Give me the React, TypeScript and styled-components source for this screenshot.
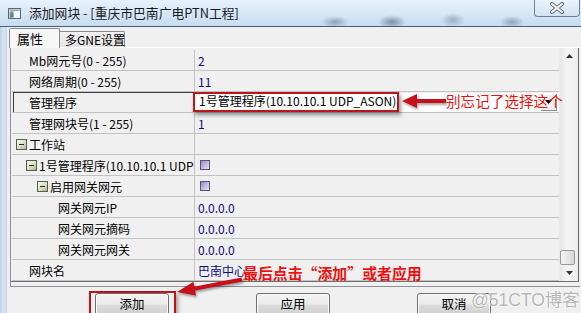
import React from 'react';
import styled, { createGlobalStyle, css } from 'styled-components';

const FONT = `"Noto Sans CJK SC", "Liberation Sans", sans-serif`;

const GlobalStyle = createGlobalStyle`
  html, body { margin: 0; padding: 0; background: #f0f0f0; }
  body { width: 581px; height: 313px; overflow: hidden; font-family: ${FONT}; }
`;

const Window = styled.div`
  position: relative;
  width: 581px;
  height: 313px;
  overflow: hidden;
  display: flex;
  flex-direction: column;
  background: linear-gradient(90deg, #bccfe2 0px, #d9e6f2 3px, #c6d7e9 7px);
  font-family: ${FONT};
`;

const TitleBar = styled.div`
  flex: none;
  height: 26px;
  display: flex;
  align-items: flex-start;
  border-bottom: 1px solid #4e5d6c;
  background:
    radial-gradient(ellipse 14px 6px at 335px 22px, rgba(70, 90, 115, 0.45), transparent),
    radial-gradient(ellipse 14px 7px at 392px 22px, rgba(60, 80, 105, 0.55), transparent),
    radial-gradient(ellipse 12px 7px at 453px 20px, rgba(80, 100, 125, 0.4), transparent),
    radial-gradient(ellipse 12px 6px at 512px 22px, rgba(70, 90, 115, 0.45), transparent),
    linear-gradient(180deg, #e6f1fb 0%, #d9e9f8 45%, #c6dcf1 100%);
`;

const AppIcon = styled.svg`
  flex: none;
  margin: 8px 0 0 8px;
`;

const Title = styled.div`
  margin: 4px 0 0 8px;
  font-size: 12.8px;
  line-height: 18px;
  color: #1b1b1b;
  white-space: nowrap;
`;

const CloseButton = styled.div`
  margin-left: auto;
  margin-right: 1px;
  width: 44px;
  height: 16px;
  border: 1px solid #6f8297;
  border-top: none;
  border-radius: 0 0 4px 4px;
  background: linear-gradient(180deg, rgba(240, 247, 253, 0.6), rgba(205, 222, 240, 0.6));
  display: flex;
  align-items: center;
  justify-content: center;
`;

const Body = styled.div`
  flex: 1;
  margin-left: 7px;
  background: #f0f0f0;
  display: flex;
  flex-direction: column;
  min-height: 0;
`;

const TabStrip = styled.div`
  flex: none;
  height: 20px;
  display: flex;
  align-items: flex-end;
  padding-left: 2px;
  position: relative;
  z-index: 1;
`;

const Tab = styled.div<{ $active?: boolean }>`
  box-sizing: border-box;
  border: 1px solid #898c95;
  border-bottom: none;
  color: #000;
  white-space: nowrap;
  display: flex;
  align-items: center;
  ${(p) =>
    p.$active
      ? css`
          width: 51px;
          height: 20px;
          margin-bottom: -1px;
          padding-left: 7px;
          font-size: 13px;
          background: #f7f7f7;
          border-radius: 2px 2px 0 0;
        `
      : css`
          width: 65px;
          height: 16px;
          padding-left: 5px;
          font-size: 12px;
          border-left: none;
          background: linear-gradient(180deg, #f2f2f2, #e3e3e3);
          border-radius: 0 2px 0 0;
        `}
`;

const Panel = styled.div`
  flex: none;
  margin-left: 3px;
  width: 570px;
  height: 240px;
  box-sizing: border-box;
  border-top: 1px solid #fdfdfd;
  border-left: 1px solid #8d9097;
  border-bottom: 1px solid #8d9097;
  padding-bottom: 4px;
  display: flex;
`;

const Grid = styled.div`
  flex: 1;
  display: flex;
  border-bottom: 1px solid #6f6f6f;
  border-right: 1px solid #6a6a6a;
  margin-right: 1px;
`;

const RowsArea = styled.div`
  flex: 1;
  padding-top: 2px;
  display: flex;
  flex-direction: column;
`;

const Row = styled.div`
  box-sizing: border-box;
  height: 21px;
  display: grid;
  grid-template-columns: 183px 1fr;
  border-bottom: 1px solid #c2c2c2;
  margin-left: 1px;
`;

const LabelCell = styled.div<{ $indent: number; $selected?: boolean }>`
  display: flex;
  align-items: center;
  gap: 2px;
  padding-left: ${(p) => p.$indent}px;
  border-right: 1px solid #c2c2c2;
  overflow: hidden;
  white-space: nowrap;
  font-size: 12px;
  color: #000;
  ${(p) =>
    p.$selected &&
    css`
      margin-left: 1px;
      padding-left: ${p.$indent - 1}px;
      box-shadow: inset 1px 1px 0 #3c3c3c;
    `}
`;

const ValueCell = styled.div<{ $editing?: boolean }>`
  display: flex;
  align-items: center;
  padding-left: 3px;
  font-size: 12px;
  color: #0a0a86;
  white-space: nowrap;
  overflow: hidden;
  ${(p) =>
    p.$editing &&
    css`
      background: #fff;
      color: #000;
      margin: 1px 0 0 0;
      padding-left: 4px;
      padding-bottom: 3px;
      line-height: 14px;
    `}
`;

const ComboButton = styled.div`
  margin-left: auto;
  margin-right: 2px;
  margin-bottom: -3px;
  width: 16px;
  height: 17px;
  box-sizing: border-box;
  border-right: 1px solid #8a8a8a;
  border-bottom: 1px solid #8a8a8a;
  box-shadow: inset 1px 1px 0 #fff;
  background: #f0f0f0;
  display: flex;
  align-items: center;
  justify-content: center;
`;

const Expander = styled.span`
  flex: none;
  width: 9px;
  height: 9px;
  border: 1px solid #51604f;
  background: linear-gradient(135deg, #fbfbea 0%, #d6dcbc 60%, #aab592 100%);
  display: flex;
  align-items: center;
  justify-content: center;
  &::after {
    content: '';
    width: 5px;
    height: 1px;
    background: #1d2a50;
  }
`;

const CheckBox = styled.span`
  width: 10px;
  height: 10px;
  box-sizing: border-box;
  border: 1px solid #5a5670;
  background: linear-gradient(135deg, #8f86bd 0%, #bdb5e2 45%, #e4e0f5 100%);
  margin-left: 2px;
`;

const ScrollBar = styled.div`
  flex: none;
  width: 19px;
  display: flex;
  flex-direction: column;
  background: linear-gradient(90deg, #e6e6e6, #f4f4f4 40%, #eeeeee);
  border-left: 1px solid #e8e8e8;
  box-sizing: border-box;
`;

const ScrollArrow = styled.div`
  flex: none;
  height: 16px;
  display: flex;
  align-items: center;
  justify-content: center;
`;

const ScrollTrack = styled.div`
  flex: 1;
  display: flex;
  flex-direction: column;
  justify-content: flex-end;
`;

const ScrollThumb = styled.div`
  height: 15px;
  width: 15px;
  box-sizing: border-box;
  border: 1px solid #979797;
  border-radius: 2px;
  background: linear-gradient(90deg, #f6f6f6, #e2e2e2 60%, #d6d6d6);
`;

const ButtonBar = styled.div`
  flex: none;
  display: flex;
  gap: 87px;
  padding: 6px 0 0 88px;
`;

const DialogButton = styled.div`
  width: 74px;
  height: 23px;
  box-sizing: border-box;
  border: 1px solid #707070;
  border-radius: 3px;
  background: linear-gradient(180deg, #f3f3f3 0%, #ebebeb 48%, #dddddd 52%, #cfcfcf 100%);
  box-shadow: inset 0 0 0 1px #fbfbfb;
  font-size: 12.5px;
  line-height: 19px;
  text-align: center;
  color: #000;
`;

/* ---- annotation overlays ---- */

const ComboHighlight = styled.div`
  position: absolute;
  left: 193px;
  top: 92px;
  width: 206px;
  height: 20px;
  box-sizing: border-box;
  border: 2px solid #c0141b;
  box-shadow: 2px 3px 4px rgba(0, 0, 0, 0.4);
`;

const AddHighlight = styled.div`
  position: absolute;
  left: 89px;
  top: 291px;
  width: 87px;
  height: 26px;
  box-sizing: border-box;
  border: 2px solid #c0141b;
  box-shadow: 2px 3px 4px rgba(0, 0, 0, 0.35);
`;

const ComboArrow = styled.svg`
  position: absolute;
  left: 400px;
  top: 91px;
  filter: drop-shadow(1px 2px 1px rgba(0, 0, 0, 0.35));
`;

const AddArrow = styled.svg`
  position: absolute;
  left: 170px;
  top: 272px;
  filter: drop-shadow(1px 2px 1px rgba(0, 0, 0, 0.35));
`;

const Note = styled.div`
  position: absolute;
  font-family: ${FONT};
  color: #f01010;
  white-space: nowrap;
  line-height: 16px;
`;

const ComboNote = styled(Note)`
  left: 446px;
  top: 93px;
  font-size: 14.6px;
`;

const AddNote = styled(Note)`
  left: 243px;
  top: 265px;
  font-size: 14.9px;
  font-weight: 700;
`;

const Watermark = styled.div`
  position: absolute;
  left: 471px;
  top: 286px;
  font-family: "Liberation Sans", "Noto Sans CJK SC", sans-serif;
  font-size: 17.5px;
  color: rgba(150, 150, 150, 0.7);
  text-shadow: 0 0 2px #fff, 0 0 1px #fff;
  white-space: nowrap;
`;

type RowData = {
  label: string;
  indent: number;
  expander?: boolean;
  value?: string;
  kind: 'text' | 'check' | 'combo' | 'none';
};

const rows: RowData[] = [
  { label: 'Mb网元号(0 - 255)', indent: 17, value: '2', kind: 'text' },
  { label: '网络周期(0 - 255)', indent: 17, value: '11', kind: 'text' },
  { label: '管理程序', indent: 17, value: '1号管理程序(10.10.10.1 UDP_ASON)', kind: 'combo' },
  { label: '管理网块号(1 - 255)', indent: 17, value: '1', kind: 'text' },
  { label: '工作站', indent: 4, expander: true, kind: 'none' },
  { label: '1号管理程序(10.10.10.1 UDP', indent: 14, expander: true, kind: 'check' },
  { label: '启用网关网元', indent: 25, expander: true, kind: 'check' },
  { label: '网关网元IP', indent: 46, value: '0.0.0.0', kind: 'text' },
  { label: '网关网元摘码', indent: 46, value: '0.0.0.0', kind: 'text' },
  { label: '网关网元网关', indent: 46, value: '0.0.0.0', kind: 'text' },
  { label: '网块名', indent: 17, value: '巴南中心', kind: 'text' },
];

function PropertyRow({ row }: { row: RowData }) {
  const selected = row.kind === 'combo';
  return (
    <Row>
      <LabelCell $indent={row.indent} $selected={selected}>
        {row.expander && <Expander />}
        <span>{row.label}</span>
      </LabelCell>
      {row.kind === 'combo' ? (
        <ValueCell $editing>
          <span>{row.value}</span>
          <ComboButton>
            <svg width="7" height="4" viewBox="0 0 7 4">
              <polygon points="0,0 7,0 3.5,4" fill="#000" />
            </svg>
          </ComboButton>
        </ValueCell>
      ) : (
        <ValueCell>
          {row.kind === 'check' ? <CheckBox /> : row.value}
        </ValueCell>
      )}
    </Row>
  );
}

export default function App() {
  return (
    <>
      <GlobalStyle />
      <Window>
        <TitleBar>
          <AppIcon width="13" height="11" viewBox="0 0 13 11">
            <defs>
              <linearGradient id="ai" x1="0" y1="0" x2="1" y2="1">
                <stop offset="0" stopColor="#8fb8a0" />
                <stop offset="1" stopColor="#2f6b6a" />
              </linearGradient>
            </defs>
            <rect x="0.5" y="0.5" width="12" height="10" fill="#e8ecef" stroke="#5f6870" />
            <rect x="1.5" y="1.5" width="10" height="1.5" fill="#9aa6b2" />
            <rect x="1.5" y="3.5" width="4" height="6" fill="url(#ai)" />
            <rect x="6" y="3.5" width="5.5" height="6" fill="#f6f8fa" />
          </AppIcon>
          <Title>添加网块 - [重庆市巴南广电PTN工程]</Title>
          <CloseButton>
            <svg width="16" height="12" viewBox="0 0 16 12">
              <path d="M3 2 L13 10 M13 2 L3 10" stroke="#5e6b78" strokeWidth="4" strokeLinecap="round" />
              <path d="M3 2 L13 10 M13 2 L3 10" stroke="#ffffff" strokeWidth="2" strokeLinecap="round" />
            </svg>
          </CloseButton>
        </TitleBar>
        <Body>
          <TabStrip>
            <Tab $active>属性</Tab>
            <Tab>多GNE设置</Tab>
          </TabStrip>
          <Panel>
            <Grid>
              <RowsArea>
                {rows.map((r, i) => (
                  <PropertyRow key={i} row={r} />
                ))}
              </RowsArea>
              <ScrollBar>
                <ScrollArrow>
                  <svg width="7" height="4" viewBox="0 0 7 4">
                    <polygon points="3.5,0 7,4 0,4" fill="#333" />
                  </svg>
                </ScrollArrow>
                <ScrollTrack>
                  <ScrollThumb />
                </ScrollTrack>
                <ScrollArrow>
                  <svg width="7" height="4" viewBox="0 0 7 4">
                    <polygon points="0,0 7,0 3.5,4" fill="#333" />
                  </svg>
                </ScrollArrow>
              </ScrollBar>
            </Grid>
          </Panel>
          <ButtonBar>
            <DialogButton>添加</DialogButton>
            <DialogButton>应用</DialogButton>
            <DialogButton>取消</DialogButton>
          </ButtonBar>
        </Body>

        <ComboHighlight />
        <ComboArrow width="48" height="20" viewBox="0 0 48 20">
          <polygon points="2,10 17,3 17,17" fill="#c8101a" />
          <rect x="15" y="8" width="31" height="4" fill="#c8101a" />
        </ComboArrow>
        <ComboNote>别忘记了选择这个</ComboNote>

        <AddHighlight />
        <AddArrow width="80" height="30" viewBox="0 0 80 30">
          <polygon points="7,20 26,23.5 23.4,9.7" fill="#c8101a" />
          <line x1="24" y1="16.7" x2="72" y2="7.5" stroke="#c8101a" strokeWidth="4" />
        </AddArrow>
        <AddNote>最后点击“添加”或者应用</AddNote>

        <Watermark>@51CTO博客</Watermark>
      </Window>
    </>
  );
}
